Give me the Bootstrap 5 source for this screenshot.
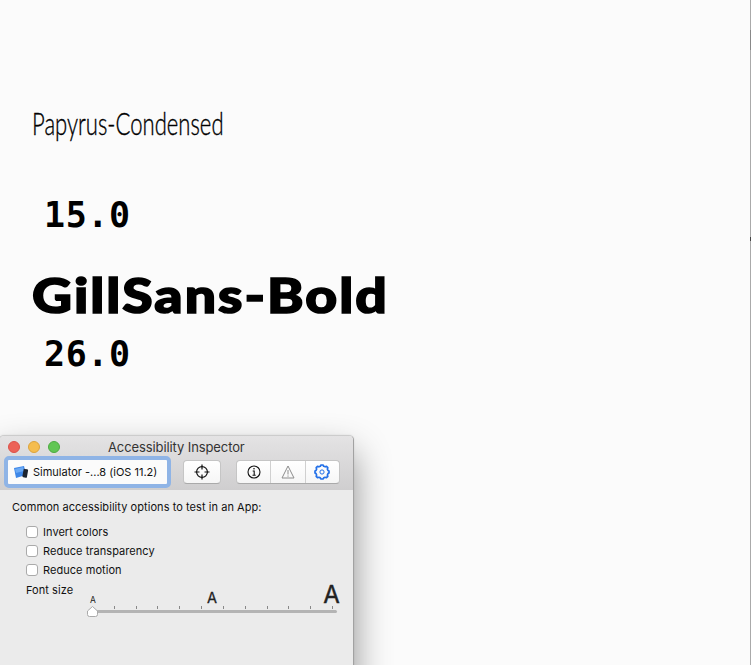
<!DOCTYPE html>
<html lang="en">
<head>
<meta charset="utf-8">
<meta name="viewport" content="width=device-width, initial-scale=1">
<title>Accessibility Inspector</title>
<link href="https://cdn.jsdelivr.net/npm/bootstrap@5.3.0/dist/css/bootstrap.min.css" rel="stylesheet">
<style>
body{background:#fbfbfb;color:#000;height:665px;font-family:Inter,"Liberation Sans",sans-serif}
.stage{height:665px;border-right:1px solid #aaa;padding:96px 0 0 33px}
.sample{transform-origin:0 50%;white-space:nowrap;width:max-content}
.thin-name{font:300 29px/54px Lato,sans-serif;transform:scale(.761,1.08);height:52px;margin-left:-1px;-webkit-text-stroke:.35px #000}
.heavy-name{font:900 48px/60px Lato,sans-serif;height:60px;margin-top:25px;margin-left:-1px;transform:scaleX(1.15);letter-spacing:1.75px;-webkit-text-stroke:1.6px #000}
.size-value{font:bold 35px/50px "DejaVu Sans Mono",monospace;height:50px;padding-left:11px;letter-spacing:.6px}
.size-one{margin-top:42px}
.size-two{margin-top:4px}
.scroll-thumb{right:-1px;top:30px;width:1px;height:20px;background:#888}
.scroll-dot{right:-1px;top:237px;width:1px;height:4px;background:#444}
.inspector{left:-1px;top:435px;width:355px;height:260px;background:#ebebeb;border:1px solid #ccc;border-right-color:#a2a2a2;border-radius:5px 5px 0 0;box-shadow:0 18px 36px rgba(0,0,0,.43),0 0 2px rgba(0,0,0,.1);font-size:11px;color:#111}
.chrome{height:54px;background:linear-gradient(#e4e3e4,#cfcecf);border-radius:4px 4px 0 0}
.titlebar{height:22px;padding-left:8px}
.light{width:12px;height:12px;border-radius:50%;margin-right:8px;border:1px solid #dc5149;background:#ec6258}
.light.amber{background:#f5bd4f;border-color:#dca33c}
.light.green{background:#61c654;border-color:#4dab41}
.window-title{font-size:13px;line-height:22px;color:#333;margin-left:40px;letter-spacing:-.1px}
.tools{padding:0 13px 0 4px;margin-top:-2px}
.target{width:167px;height:32px;border:4px solid #8fb4e6;border-radius:5px;background:#fbfbfb;padding-left:6px;font-size:11px}
.tool{height:24px;background:linear-gradient(#fff,#f6f6f6);border:1px solid #c5c5c5;border-bottom-color:#aaa;border-radius:4px}
.tool-single{width:38px;margin-left:12px}
.tool-group{width:104px;margin-left:15px}
.tool-group>span{flex:1;height:22px}
.tool-group>span+span{border-left:1px solid #d0d0d0}
.options{padding:9px 12px 0}
.options-title{line-height:17px;margin-bottom:6px;white-space:nowrap;letter-spacing:.06px}
.option{height:19px;margin-left:14px}
.option span{padding-top:1px;letter-spacing:.05px}
.option .form-check-input{width:12px;height:12px;margin:0 5px 0 0;border:1px solid #aaa;border-radius:3px;background:#fff}
.font-row{height:40px;margin-left:14px;padding-top:1px}
.font-row>span{width:48px;line-height:20px;letter-spacing:.05px}
.font-scale{margin-left:6px;width:266px;height:38px;flex-shrink:0}
.target,.tool-single,.tool-group{flex-shrink:0}
.target{width:167px}
</style>
</head>
<body>
<main class="stage position-relative overflow-visible">
  <div class="sample thin-name">Papyrus-Condensed</div>
  <div class="sample size-value size-one">15.0</div>
  <div class="sample heavy-name">GillSans-Bold</div>
  <div class="sample size-value size-two">26.0</div>
  <section class="inspector position-absolute">
    <header class="chrome">
      <div class="titlebar d-flex align-items-center">
        <i class="light"></i><i class="light amber"></i><i class="light green"></i>
        <span class="window-title">Accessibility Inspector</span>
      </div>
      <div class="tools d-flex align-items-center">
        <div class="target d-flex align-items-center text-nowrap">
          <svg class="me-1" width="15" height="14" viewBox="0 0 15 14"><path d="M0 3l10-2 2 9-10 3z" fill="#3e87e8"/><path d="M1 4l8-2 1 4-8 2z" fill="#6aa9f5"/><rect x="9" y="4" width="4.6" height="8.5" rx="1" fill="#1c2430" transform="rotate(10 11 8)"/></svg>
          <span class="target-label">Simulator -...8 (iOS 11.2)</span>
        </div>
        <div class="tool tool-single d-flex align-items-center justify-content-center">
          <svg width="16" height="16" viewBox="0 0 16 16" fill="none" stroke="#111" stroke-width="1.2"><circle cx="8" cy="8" r="5.400"/><path d="M8 .5V5.500M8 10.500v5M.5 8H5.500M10.500 8h5"/></svg>
        </div>
        <div class="tool tool-group d-flex align-items-center">
          <span class="d-flex align-items-center justify-content-center"><svg width="14" height="14" viewBox="0 0 14 14" fill="none" stroke="#111" stroke-width="1.1"><circle cx="7" cy="7" r="6"/><path d="M5.700 6h1.500v4M5.500 10.200h3.200"/><circle cx="7" cy="3.800" r=".8" fill="#111" stroke="none"/></svg></span>
          <span class="d-flex align-items-center justify-content-center"><svg width="14" height="14" viewBox="0 0 14 14" fill="none" stroke="#8c8c8c" stroke-linejoin="round"><path d="M7 1l6 12H1zM7 5v4.500M7 10.500v1.200"/></svg></span>
          <span class="d-flex align-items-center justify-content-center"><svg width="16" height="16" viewBox="0 0 16 16" fill="none" stroke="#2370e8" stroke-linejoin="round"><path stroke-width="1.700" d="M6.300 2.200L7 1h2l.7 1.200 1.500.6 1.300-.4 1.300 1.300-.4 1.400.6 1.400L15 7v2l-1 .6-.6 1.400.4 1.300-1.300 1.400-1.400-.4-1.400.6L9 15H7l-.7-1.100-1.400-.6-1.400.4-1.300-1.400.4-1.300L2 9.600 1 9V7l1-.5.6-1.400-.4-1.400 1.300-1.300 1.400.4z"/><circle cx="8" cy="8" r="2.100"/></svg></span>
        </div>
      </div>
    </header>
    <div class="options">
      <div class="options-title">Common accessibility options to test in an App:</div>
      <label class="option d-flex align-items-center"><input class="form-check-input" type="checkbox"><span>Invert colors</span></label>
      <label class="option d-flex align-items-center"><input class="form-check-input" type="checkbox"><span>Reduce transparency</span></label>
      <label class="option d-flex align-items-center"><input class="form-check-input" type="checkbox"><span>Reduce motion</span></label>
      <div class="font-row d-flex text-nowrap"><span>Font size</span>
        <svg class="font-scale" viewBox="79 580 266 38" font-family="Inter,sans-serif" text-anchor="middle" fill="#222">
          <text x="93" y="603" font-size="8.500">A</text><text x="212" y="603" font-size="14.500" stroke="#222" stroke-width=".3">A</text><text x="331.500" y="603" font-size="24" stroke="#222" stroke-width=".4">A</text>
          <path d="M114.500 606v3M136.500 606v3M157.500 606v3M179.500 606v3M201.500 606v3M223.500 606v3M245.500 606v3M267.500 606v3M288.500 606v3M310.500 606v3M332.500 606v3" stroke="#888"/>
          <rect x="93" y="610" width="244" height="3" rx="1.500" fill="#b4b4b4"/>
          <path d="M92.500 606.500l5 4.500v3.500q0 2-2 2h-6q-2 0-2-2V611z" fill="#fff" stroke="#aaa"/>
        </svg>
      </div>
    </div>
  </section>
  <i class="scroll-thumb position-absolute"></i><i class="scroll-dot position-absolute"></i>
</main>
<script src="https://cdn.jsdelivr.net/npm/bootstrap@5.3.0/dist/js/bootstrap.bundle.min.js"></script>
</body>
</html>
